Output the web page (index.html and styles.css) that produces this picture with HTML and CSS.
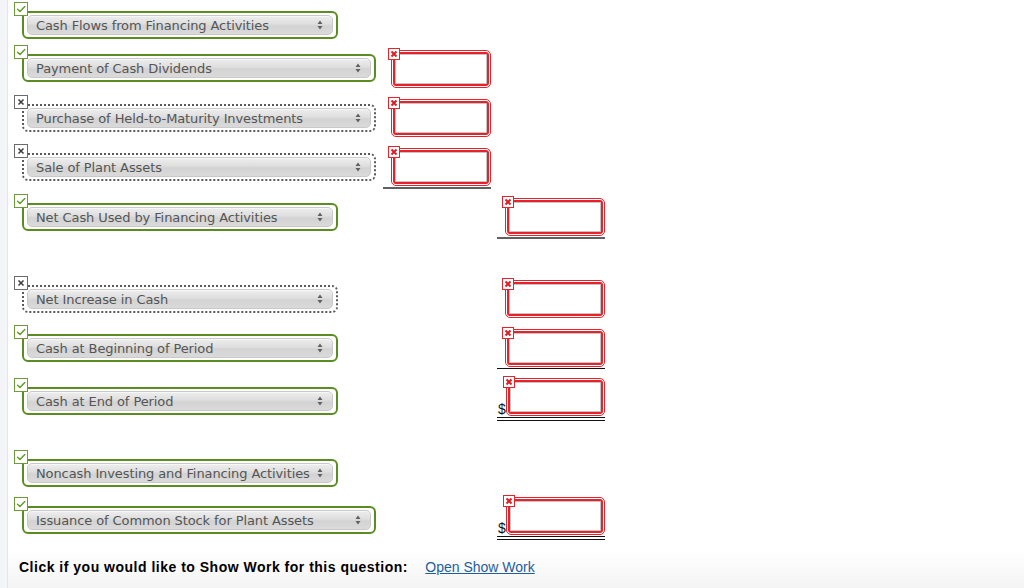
FILE: index.html
```html
<!DOCTYPE html>
<html lang="en">
<head>
<meta charset="utf-8">
<title>Cash Flows from Financing Activities</title>
<link rel="stylesheet" href="styles.css">
</head>
<body>
<div class="layout">
  <div class="side"></div>
  <main class="main">

    <div class="row h43">
      <div class="label">
        <span class="mark ok"><svg viewBox="0 0 10 8" width="10" height="8"><path d="M1.5 4.2 L4 6.5 L8.8 1.5" /></svg></span>
        <div class="frame ok w-s"><div class="sel"><span>Cash Flows from Financing Activities</span><svg class="arr" viewBox="0 0 6 10" width="6" height="10"><path d="M3 0.5 L5.5 4 L0.5 4 Z M3 9.5 L5.5 6 L0.5 6 Z"/></svg></div></div>
      </div>
    </div>

    <div class="row h50">
      <div class="label">
        <span class="mark ok"><svg viewBox="0 0 10 8" width="10" height="8"><path d="M1.5 4.2 L4 6.5 L8.8 1.5" /></svg></span>
        <div class="frame ok w-l"><div class="sel"><span>Payment of Cash Dividends</span><svg class="arr" viewBox="0 0 6 10" width="6" height="10"><path d="M3 0.5 L5.5 4 L0.5 4 Z M3 9.5 L5.5 6 L0.5 6 Z"/></svg></div></div>
      </div>
      <div class="amt c1 low">
        <div class="box"><span class="bad"><svg viewBox="0 0 8 8" width="8" height="8"><path d="M1.5 1.5 L6.5 6.5 M6.5 1.5 L1.5 6.5"/></svg></span><div class="inner"></div></div>
      </div>
    </div>

    <div class="row h49">
      <div class="label">
        <span class="mark no"><svg viewBox="0 0 8 8" width="8" height="8"><path d="M1.5 1.5 L6.5 6.5 M6.5 1.5 L1.5 6.5"/></svg></span>
        <div class="frame no w-l"><div class="sel"><span>Purchase of Held-to-Maturity Investments</span><svg class="arr" viewBox="0 0 6 10" width="6" height="10"><path d="M3 0.5 L5.5 4 L0.5 4 Z M3 9.5 L5.5 6 L0.5 6 Z"/></svg></div></div>
      </div>
      <div class="amt c1">
        <div class="box"><span class="bad"><svg viewBox="0 0 8 8" width="8" height="8"><path d="M1.5 1.5 L6.5 6.5 M6.5 1.5 L1.5 6.5"/></svg></span><div class="inner"></div></div>
      </div>
    </div>

    <div class="row h50">
      <div class="label">
        <span class="mark no"><svg viewBox="0 0 8 8" width="8" height="8"><path d="M1.5 1.5 L6.5 6.5 M6.5 1.5 L1.5 6.5"/></svg></span>
        <div class="frame no w-l"><div class="sel"><span>Sale of Plant Assets</span><svg class="arr" viewBox="0 0 6 10" width="6" height="10"><path d="M3 0.5 L5.5 4 L0.5 4 Z M3 9.5 L5.5 6 L0.5 6 Z"/></svg></div></div>
      </div>
      <div class="amt c1 line-g">
        <div class="box"><span class="bad"><svg viewBox="0 0 8 8" width="8" height="8"><path d="M1.5 1.5 L6.5 6.5 M6.5 1.5 L1.5 6.5"/></svg></span><div class="inner"></div></div>
      </div>
    </div>

    <div class="row h82">
      <div class="label">
        <span class="mark ok"><svg viewBox="0 0 10 8" width="10" height="8"><path d="M1.5 4.2 L4 6.5 L8.8 1.5" /></svg></span>
        <div class="frame ok w-s"><div class="sel"><span>Net Cash Used by Financing Activities</span><svg class="arr" viewBox="0 0 6 10" width="6" height="10"><path d="M3 0.5 L5.5 4 L0.5 4 Z M3 9.5 L5.5 6 L0.5 6 Z"/></svg></div></div>
      </div>
      <div class="amt c2 line-g">
        <div class="box"><span class="bad"><svg viewBox="0 0 8 8" width="8" height="8"><path d="M1.5 1.5 L6.5 6.5 M6.5 1.5 L1.5 6.5"/></svg></span><div class="inner"></div></div>
      </div>
    </div>

    <div class="row h49">
      <div class="label">
        <span class="mark no"><svg viewBox="0 0 8 8" width="8" height="8"><path d="M1.5 1.5 L6.5 6.5 M6.5 1.5 L1.5 6.5"/></svg></span>
        <div class="frame no w-s"><div class="sel"><span>Net Increase in Cash</span><svg class="arr" viewBox="0 0 6 10" width="6" height="10"><path d="M3 0.5 L5.5 4 L0.5 4 Z M3 9.5 L5.5 6 L0.5 6 Z"/></svg></div></div>
      </div>
      <div class="amt c2">
        <div class="box"><span class="bad"><svg viewBox="0 0 8 8" width="8" height="8"><path d="M1.5 1.5 L6.5 6.5 M6.5 1.5 L1.5 6.5"/></svg></span><div class="inner"></div></div>
      </div>
    </div>

    <div class="row h53">
      <div class="label">
        <span class="mark ok"><svg viewBox="0 0 10 8" width="10" height="8"><path d="M1.5 4.2 L4 6.5 L8.8 1.5" /></svg></span>
        <div class="frame ok w-s"><div class="sel"><span>Cash at Beginning of Period</span><svg class="arr" viewBox="0 0 6 10" width="6" height="10"><path d="M3 0.5 L5.5 4 L0.5 4 Z M3 9.5 L5.5 6 L0.5 6 Z"/></svg></div></div>
      </div>
      <div class="amt c2 line-b">
        <div class="box"><span class="bad"><svg viewBox="0 0 8 8" width="8" height="8"><path d="M1.5 1.5 L6.5 6.5 M6.5 1.5 L1.5 6.5"/></svg></span><div class="inner"></div></div>
      </div>
    </div>

    <div class="row h72">
      <div class="label">
        <span class="mark ok"><svg viewBox="0 0 10 8" width="10" height="8"><path d="M1.5 4.2 L4 6.5 L8.8 1.5" /></svg></span>
        <div class="frame ok w-s"><div class="sel"><span>Cash at End of Period</span><svg class="arr" viewBox="0 0 6 10" width="6" height="10"><path d="M3 0.5 L5.5 4 L0.5 4 Z M3 9.5 L5.5 6 L0.5 6 Z"/></svg></div></div>
      </div>
      <div class="amt c2 up dbl">
        <span class="cur">$</span>
        <div class="box"><span class="bad"><svg viewBox="0 0 8 8" width="8" height="8"><path d="M1.5 1.5 L6.5 6.5 M6.5 1.5 L1.5 6.5"/></svg></span><div class="inner"></div></div>
      </div>
    </div>

    <div class="row h47">
      <div class="label">
        <span class="mark ok"><svg viewBox="0 0 10 8" width="10" height="8"><path d="M1.5 4.2 L4 6.5 L8.8 1.5" /></svg></span>
        <div class="frame ok w-s"><div class="sel"><span>Noncash Investing and Financing Activities</span><svg class="arr" viewBox="0 0 6 10" width="6" height="10"><path d="M3 0.5 L5.5 4 L0.5 4 Z M3 9.5 L5.5 6 L0.5 6 Z"/></svg></div></div>
      </div>
    </div>

    <div class="row h62">
      <div class="label">
        <span class="mark ok"><svg viewBox="0 0 10 8" width="10" height="8"><path d="M1.5 4.2 L4 6.5 L8.8 1.5" /></svg></span>
        <div class="frame ok w-l"><div class="sel"><span>Issuance of Common Stock for Plant Assets</span><svg class="arr" viewBox="0 0 6 10" width="6" height="10"><path d="M3 0.5 L5.5 4 L0.5 4 Z M3 9.5 L5.5 6 L0.5 6 Z"/></svg></div></div>
      </div>
      <div class="amt c2 up dbl">
        <span class="cur">$</span>
        <div class="box"><span class="bad"><svg viewBox="0 0 8 8" width="8" height="8"><path d="M1.5 1.5 L6.5 6.5 M6.5 1.5 L1.5 6.5"/></svg></span><div class="inner"></div></div>
      </div>
    </div>

    <p class="foot">Click if you would like to Show Work for this question: <a class="link" href="#">Open Show Work</a></p>
  </main>
</div>
</body>
</html>
```

FILE: styles.css
```css
* { box-sizing: border-box; }
html, body { margin: 0; padding: 0; background: #fff; }
body { font-family: "DejaVu Sans", Verdana, sans-serif; }

.layout { display: flex; min-height: 588px; }
.side {
  width: 8px;
  flex: none;
  background: #f3f5f8;
  border-right: 1px solid #e3e7ec;
}
.main {
  flex: 1;
  padding: 2px 0 0 6px;
  background: linear-gradient(to bottom, #ffffff 0, #ffffff 550px, #f4f4f4 588px);
}

.row {
  display: grid;
  grid-template-columns: 363px 108px 108px;
  column-gap: 6px;
  align-items: start;
}
.h43 { height: 43px; }
.h47 { height: 47px; }
.h49 { height: 49px; }
.h50 { height: 50px; }
.h53 { height: 53px; }
.h62 { height: 62px; }
.h72 { height: 72px; }
.h82 { height: 82px; }

.label { position: relative; padding: 9px 0 0 8px; }

.mark {
  position: absolute;
  left: 0;
  top: 0;
  width: 14px;
  height: 14px;
  background: #fff;
  display: flex;
  align-items: center;
  justify-content: center;
  z-index: 2;
}
.mark.ok { border: 1px solid #6e9a37; }
.mark.ok svg path { fill: none; stroke: #5e9a22; stroke-width: 1.4; stroke-linecap: round; stroke-linejoin: round; }
.mark.no { border: 1px solid #6b6b6b; }
.mark.no svg path { fill: none; stroke: #3a3a3a; stroke-width: 1.5; }

.frame {
  border-radius: 6px;
  padding: 2px 3px;
}
.frame.ok { border: 2px solid #5b8c22; }
.frame.no { border: 2px dotted #5a5a5a; }
.w-s { width: 316px; }
.w-l { width: 354px; }

.sel {
  height: 20px;
  border-radius: 5px;
  border: 1px solid #c9c9c9;
  background: linear-gradient(to bottom, #eeeeee 0%, #dedede 45%, #d3d3d3 55%, #dadada 100%);
  box-shadow: inset 0 1px 0 #f7f7f7;
  display: flex;
  align-items: center;
  justify-content: space-between;
  padding: 0 9px 0 8px;
  font-size: 13px;
  letter-spacing: -0.1px;
  color: #555;
  white-space: nowrap;
}
.arr { flex: none; }
.arr path { fill: #606060; }

.amt {
  display: flex;
  align-items: flex-end;
  justify-content: flex-end;
  padding-top: 4px;
  padding-bottom: 1px;
}
.amt.low { padding-top: 5px; }
.amt.up { padding-top: 0; }
.c1 { grid-column: 2; }
.c2 { grid-column: 3; }
.line-g { border-bottom: 2px solid #606060; }
.line-b { border-bottom: 1px solid #111; }
.dbl { border-bottom: 4px double #111; padding-bottom: 1px; }

.cur {
  margin-right: auto;
  font-family: "Liberation Sans", Arial, sans-serif;
  font-size: 14px;
  line-height: 14px;
  color: #111;
  padding-left: 1px;
}

.box {
  position: relative;
  width: 100px;
  height: 38px;
  border: 1px solid #e5232c;
  border-radius: 5px;
  padding: 1px;
  background: #fff;
}
.inner {
  height: 100%;
  border: 2px solid #e5232c;
  border-radius: 3px;
  background: #fff;
  box-shadow: inset 0 0 0 1px #c4c4c4;
}
.bad {
  position: absolute;
  left: -4px;
  top: -3px;
  width: 12px;
  height: 12px;
  background: #fff;
  border: 1px solid #e5232c;
  display: flex;
  align-items: center;
  justify-content: center;
  z-index: 2;
}
.bad svg path { fill: none; stroke: #e01b24; stroke-width: 2; }

.foot {
  margin: 0;
  padding-left: 5px;
  font-family: "Liberation Sans", Arial, sans-serif;
  font-size: 14px;
  letter-spacing: 0.5px;
  font-weight: bold;
  line-height: 16px;
  color: #000;
}
.link {
  margin-left: 13px;
  font-weight: normal;
  font-size: 14px;
  letter-spacing: 0;
  color: #1f5f9c;
  text-decoration: underline;
}
```
